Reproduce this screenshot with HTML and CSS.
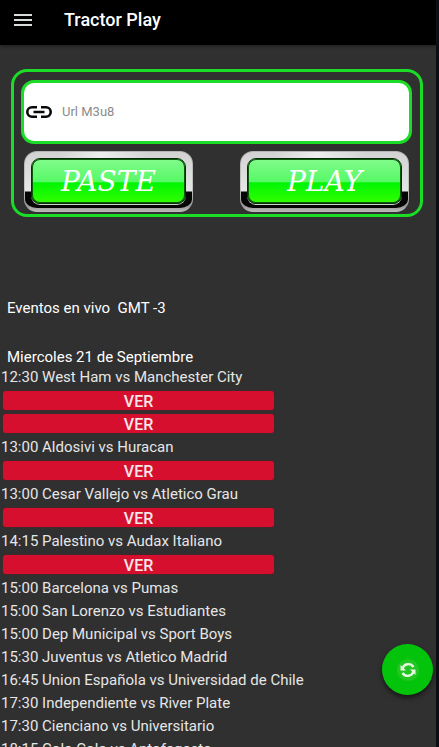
FILE: index.html
```html
<!DOCTYPE html>
<html lang="es">
<head>
<meta charset="utf-8">
<meta name="viewport" content="width=device-width, initial-scale=1">
<title>Tractor Play</title>
<link rel="stylesheet" href="styles.css">
</head>
<body>
<div class="app">
  <header class="bar">
    <button class="menu" type="button" aria-label="Menu">
      <svg width="18" height="12" viewBox="0 0 18 12"><path d="M0 1h18M0 6h18M0 11h18" stroke="#d8dcda" stroke-width="2"/></svg>
    </button>
    <h1 class="title">Tractor Play</h1>
  </header>
  <main class="content">
    <form class="player">
      <div class="field">
        <label for="url" aria-label="Url">
          <svg class="link" width="26" height="14" viewBox="0 0 26 14" fill="none" stroke="#080808" stroke-width="2.600"><path d="M11 2.300H6a4.700 4.700 0 0 0 0 9.400h5M15 2.300h5a4.700 4.700 0 0 1 0 9.400h-5M7.500 7h11"/></svg>
        </label>
        <input id="url" class="url" type="text" placeholder="Url M3u8">
      </div>
      <div class="actions">
        <button class="metal" type="button"><span class="glass">PASTE</span></button>
        <button class="metal" type="button"><span class="glass">PLAY</span></button>
      </div>
    </form>
    <section class="events">
      <h2 class="heading">Eventos en vivo &nbsp;GMT -3</h2>
      <h3 class="heading day">Miercoles 21 de Septiembre</h3>
      <ul class="matches">
        <li class="match">12:30 West Ham vs Manchester City
          <div class="streams"><button class="ver" type="button">VER</button><button class="ver" type="button">VER</button></div></li>
        <li class="match">13:00 Aldosivi vs Huracan
          <div class="streams"><button class="ver" type="button">VER</button></div></li>
        <li class="match">13:00 Cesar Vallejo vs Atletico Grau
          <div class="streams"><button class="ver" type="button">VER</button></div></li>
        <li class="match">14:15 Palestino vs Audax Italiano
          <div class="streams"><button class="ver" type="button">VER</button></div></li>
        <li class="match">15:00 Barcelona vs Pumas</li>
        <li class="match">15:00 San Lorenzo vs Estudiantes</li>
        <li class="match">15:00 Dep Municipal vs Sport Boys</li>
        <li class="match">15:30 Juventus vs Atletico Madrid</li>
        <li class="match">16:45 Union Española vs Universidad de Chile</li>
        <li class="match">17:30 Independiente vs River Plate</li>
        <li class="match">17:30 Cienciano vs Universitario</li>
        <li class="match">18:15 Colo Colo vs Antofagasta</li>
      </ul>
    </section>
  </main>
  <button class="refresh" type="button" aria-label="Actualizar">
    <svg width="24" height="24" viewBox="0 0 24 24"><circle cx="12" cy="12" r="11" fill="#22c522"/><g fill="none" stroke="#e4f9df" stroke-width="2.400"><path d="M6.500 10.500C8 5.500 14.500 4.500 17.500 9"/><path d="M17.500 13.500C16 18.500 9.500 19.500 6.500 15"/></g><path d="M4.500 7v5.500h5.500zM19.500 17v-5.500h-5.500z" fill="#e4f9df"/></svg>
  </button>
</div>
</body>
</html>
```
FILE: styles.css
```css
* { box-sizing: border-box; }

body {
  margin: 0;
  background: #303030;
  color: #fff;
  font-family: Roboto, "Liberation Sans", sans-serif;
}

button { font: inherit; color: inherit; border: 0; padding: 0; cursor: pointer; }
svg { display: block; }

.app {
  position: relative;
  display: flex;
  flex-direction: column;
  height: 100vh;
  border-right: 3px solid #0a0d13;
}

.bar {
  display: flex;
  flex: none;
  align-items: center;
  gap: 32px;
  height: 45px;
  padding: 0 14px 6px;
  background: #000;
  box-shadow: 0 1px 3px #1c1c1c;
}

.menu { background: none; }
.title { margin: 0; font-size: 18px; line-height: 24px; font-weight: 500; }

.content {
  flex: 1;
  min-height: 0;
  overflow-y: auto;
  scrollbar-width: none;
  padding-top: 24px;
}

.player {
  margin: 0 13px 0 11px;
  padding: 8px 8px 2px 7px;
  border: 3px solid #1bdc27;
  border-radius: 16px;
}

.field {
  display: flex;
  align-items: center;
  gap: 10px;
  height: 64px;
  padding: 0 2px;
  border: 3px solid #1bdc27;
  border-radius: 13px;
  background: #fff;
}

.url {
  flex: 1;
  min-width: 0;
  padding: 0;
  border: 0;
  outline: 0;
  background: none;
  color: #222;
  font: 13px/20px Roboto, "Liberation Sans", sans-serif;
}
.url::placeholder { color: #8b8b8b; }

.actions {
  display: flex;
  justify-content: space-between;
  padding: 7px 3px 0;
}

.metal {
  width: 169px;
  height: 61px;
  padding: 6px 6px 4px;
  border: 1px solid transparent;
  border-bottom-width: 4px;
  border-radius: 13px;
  background:
    linear-gradient(90deg, transparent 20%, #fff9 45%, transparent 75%) 0 0 / 100% 7px no-repeat padding-box,
    linear-gradient(#d2d2d2, #e6e6e6 39px, #050505 40px) padding-box,
    linear-gradient(#b4b4b4, #c4c4c4 60%, #999 90%, #bdbdbd) border-box;
}

.glass {
  display: flex;
  align-items: center;
  justify-content: center;
  height: 100%;
  padding-top: 2px;
  border: 1px solid #082b08;
  border-radius: 9px;
  background: linear-gradient(#82fb8c, #56f966 52%, #00f500 54%, #32ff00);
  box-shadow: 0 1px 0 #c8d8c8, inset 0 0 0 1px #0b5a0b;
  font: italic 28px/32px "DejaVu Serif", "Liberation Serif", serif;
}

.events { padding-top: 80px; }

.heading {
  margin: 0;
  padding-left: 7px;
  font-size: 15px;
  line-height: 22px;
  font-weight: 400;
}
.day { margin-top: 27px; height: 20px; overflow: hidden; }

.matches { margin: 0; padding: 0; list-style: none; }

.match {
  padding-left: 1px;
  color: #e6e6e6;
  font-size: 15px;
  line-height: 23px;
  white-space: nowrap;
}

.streams {
  display: flex;
  flex-direction: column;
  gap: 4px;
  width: 63%;
  padding: 2px 1px 3px 2px;
}

.ver {
  height: 19px;
  border-radius: 3px;
  background: #d60f2f;
  box-shadow: 0 0 2px #701828;
  color: #f5e6e8;
  font-size: 16px;
  font-weight: 500;
  line-height: 21px;
}

.refresh {
  position: absolute;
  right: 3px;
  bottom: 52px;
  display: grid;
  place-items: center;
  width: 51px;
  height: 51px;
  border-radius: 50%;
  background: #03c40b;
  box-shadow: 0 3px 5px #0008;
}
```
